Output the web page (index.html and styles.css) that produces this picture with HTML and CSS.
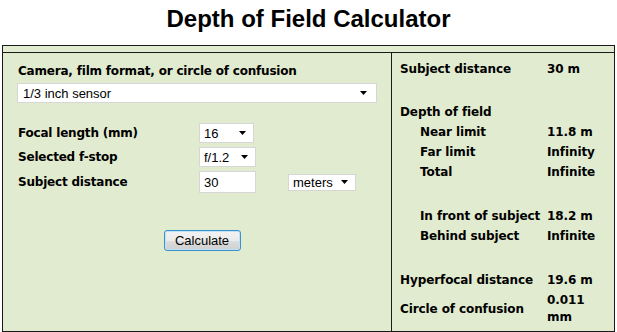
FILE: index.html
```html
<!DOCTYPE html>
<html>
<head>
<meta charset="utf-8">
<title>Depth of Field Calculator</title>
<link rel="stylesheet" href="styles.css">
</head>
<body>
<h1 class="title">Depth of Field Calculator</h1>
<div class="frame">
  <div class="topbar"></div>
  <div class="cols">
    <div class="left">
      <div class="lbl">Camera, film format, or circle of confusion</div>
      <div class="sel sel-big">
        <select><option>1/3 inch sensor</option></select>
        <svg class="arrow" width="7" height="4" viewBox="0 0 7 4"><path d="M0 0H7L3.5 4Z" fill="#000"/></svg>
      </div>
      <div class="form">
        <div class="lbl">Focal length (mm)</div>
        <div class="sel sel-focal">
          <select><option>16</option></select>
          <svg class="arrow" width="7" height="4" viewBox="0 0 7 4"><path d="M0 0H7L3.5 4Z" fill="#000"/></svg>
        </div>
        <div></div>
        <div class="lbl">Selected f-stop</div>
        <div class="sel sel-fstop">
          <select><option>f/1.2</option></select>
          <svg class="arrow" width="7" height="4" viewBox="0 0 7 4"><path d="M0 0H7L3.5 4Z" fill="#000"/></svg>
        </div>
        <div></div>
        <div class="lbl">Subject distance</div>
        <input class="txt" type="text" value="30">
        <div class="sel sel-units">
          <select><option>meters</option></select>
          <svg class="arrow" width="7" height="4" viewBox="0 0 7 4"><path d="M0 0H7L3.5 4Z" fill="#000"/></svg>
        </div>
      </div>
      <div class="btnrow"><button class="btn" type="button">Calculate</button></div>
    </div>
    <div class="right">
      <div class="row"><span class="k">Subject distance</span><span class="v">30 m</span></div>
      <div class="row gap"><span class="k">Depth of field</span><span class="v"></span></div>
      <div class="row"><span class="k ind">Near limit</span><span class="v">11.8 m</span></div>
      <div class="row"><span class="k ind">Far limit</span><span class="v">Infinity</span></div>
      <div class="row"><span class="k ind">Total</span><span class="v">Infinite</span></div>
      <div class="row gap2"><span class="k ind">In front of subject</span><span class="v">18.2 m</span></div>
      <div class="row"><span class="k ind">Behind subject</span><span class="v">Infinite</span></div>
      <div class="row gap2"><span class="k">Hyperfocal distance</span><span class="v">19.6 m</span></div>
      <div class="row coc"><span class="k">Circle of confusion</span><span class="v">0.011 mm</span></div>
    </div>
  </div>
</div>
</body>
</html>
```

FILE: styles.css
```css
html, body {
  margin: 0;
  padding: 0;
  background: #ffffff;
  color: #000;
}
body {
  width: 617px;
  height: 332px;
  overflow: hidden;
  font-family: "DejaVu Sans", Verdana, sans-serif;
}
.title {
  margin: 0;
  padding-top: 5px;
  height: 45px;
  box-sizing: border-box;
  text-align: center;
  font-family: "Liberation Sans", Arial, sans-serif;
  font-weight: bold;
  font-size: 24px;
  line-height: 28px;
}
.frame {
  margin-left: 2px;
  width: 613px;
  height: 287px;
  box-sizing: border-box;
  border: 1px solid #1a1a1a;
  background: #e1ebcf;
  display: flex;
  flex-direction: column;
}
.topbar {
  height: 6px;
  border-bottom: 1px solid #1a1a1a;
}
.cols {
  flex: 1;
  display: flex;
}
.left {
  width: 389px;
  border-right: 1px solid #1a1a1a;
  padding: 10px 6px 0 15px;
  box-sizing: border-box;
}
.right {
  flex: 1;
  padding: 6px 0 0 8px;
}
.lbl {
  font-weight: bold;
  font-size: 12px;
  line-height: 16px;
  letter-spacing: -0.2px;
  white-space: nowrap;
}
.sel {
  position: relative;
  display: inline-block;
  justify-self: start;
}
.sel select {
  appearance: none;
  -webkit-appearance: none;
  display: block;
  background: #fff;
  border: 1px solid #d6d6d6;
  border-radius: 0;
  font-family: "Liberation Sans", Arial, sans-serif;
  font-size: 13px;
  color: #000;
  padding: 0 0 0 4px;
  margin: 0;
  box-sizing: border-box;
  outline: none;
}
.sel .arrow {
  position: absolute;
  top: 50%;
  margin-top: -2px;
  right: 8px;
  pointer-events: none;
}
.sel-big {
  display: block;
  margin: 4px 0 0 -1px;
}
.sel-big select {
  width: 360px;
  height: 20px;
  padding-left: 5px;
}
.sel-big .arrow { right: 10px; }
.form {
  margin-top: 20px;
  display: grid;
  grid-template-columns: 181px 89px auto;
  row-gap: 4px;
  align-items: center;
}
.sel-focal select { width: 55px; height: 20px; }
.sel-fstop select { width: 57px; height: 20px; }
.sel-units select { width: 68px; height: 17px; }
.txt {
  width: 57px;
  height: 22px;
  box-sizing: border-box;
  border: 1px solid #d6d6d6;
  background: #fff;
  font-family: "Liberation Sans", Arial, sans-serif;
  font-size: 13px;
  padding: 0 0 0 4px;
  margin: 0;
  outline: none;
  justify-self: start;
}
.btnrow {
  margin-top: 37px;
  display: flex;
  justify-content: center;
}
.btn {
  width: 77px;
  height: 21px;
  box-sizing: border-box;
  border: 1px solid #3c91c9;
  border-radius: 3px;
  background: linear-gradient(#f2f2f2 0%, #ebebeb 50%, #dddddd 51%, #cfcfcf 100%);
  box-shadow: inset 0 0 0 1px #bde3f7;
  font-family: "Liberation Sans", Arial, sans-serif;
  font-size: 13px;
  color: #000;
  padding: 0;
  margin: 0 0 0 1px;
}
.row {
  display: flex;
  align-items: center;
  font-weight: bold;
  font-size: 12px;
  line-height: 20px;
  letter-spacing: -0.1px;
}
.row .k {
  width: 147px;
  flex: none;
  white-space: nowrap;
}
.row .k.ind { padding-left: 20px; box-sizing: border-box; }
.row .v { flex: 1; }
.gap { margin-top: 23px; }
.gap2 { margin-top: 24px; }
.coc { margin-top: 2px; }
.coc .v { flex: none; line-height: 17px; width: 44px; }
```
